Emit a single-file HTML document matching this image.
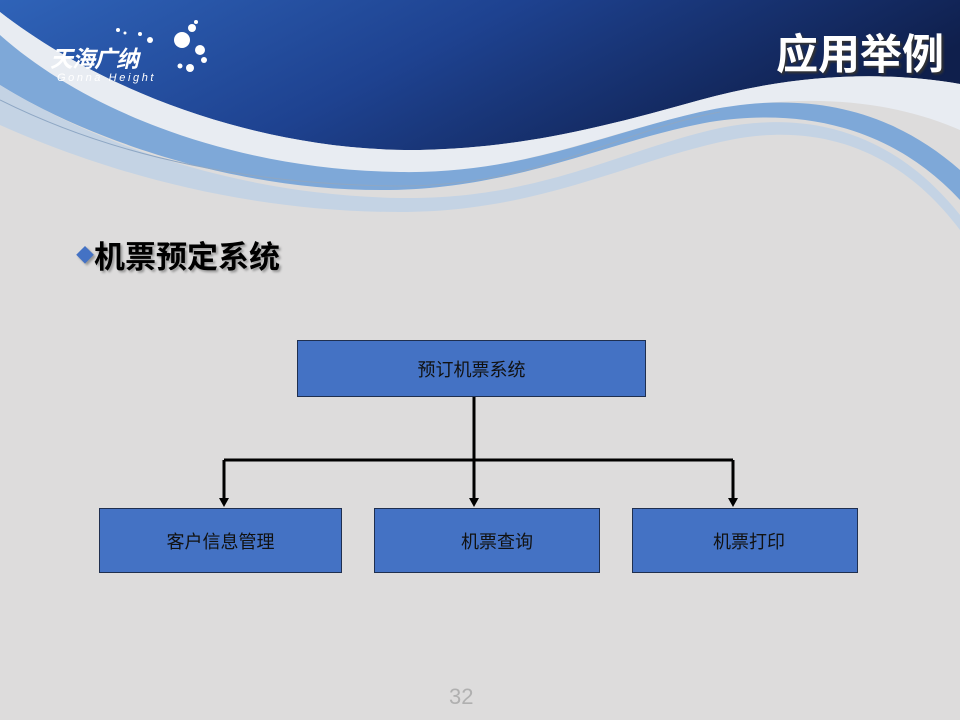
<!DOCTYPE html>
<html><head><meta charset="utf-8"><style>
body{margin:0;width:960px;height:720px;background:#dddcdc;position:relative;overflow:hidden;font-family:"Liberation Sans","Noto Sans CJK SC",sans-serif}
.box{position:absolute;background:#4472c4;border:1px solid #1f2f4f;box-sizing:border-box;color:#111;font-size:18px;display:flex;align-items:center;justify-content:center}
</style></head><body>
<svg width="960" height="720" style="position:absolute;left:0;top:0">
<defs>
<linearGradient id="g" x1="0" y1="0" x2="1" y2="0.3">
<stop offset="0" stop-color="#2f63b8"/><stop offset="0.5" stop-color="#1e4290"/><stop offset="1" stop-color="#0f1f4c"/>
</linearGradient>
</defs>
<rect width="960" height="230" fill="#dddcdc"/>
<path d="M0 0 H960 V84 C880 70 790 75 700 100 C600 128 520 148 420 150 C260 152 100 90 0 12 Z" fill="url(#g)"/>
<path d="M0 12 C100 90 260 152 420 150 C520 148 600 128 700 100 C790 75 880 70 960 84 V130 C880 95 790 95 700 112 C600 135 520 172 400 175 C240 178 80 110 0 45 Z" fill="#e8ecf2"/>
<path d="M0 35 C90 115 240 170 400 172 C520 174 600 135 700 112 C790 92 880 100 960 170 V200 C890 125 800 108 710 122 C610 140 520 188 390 190 C230 192 80 135 0 85 Z" fill="#7ea8d8"/>
<path d="M0 85 C90 140 230 195 400 198 C540 200 620 150 720 128 C820 108 900 140 960 215 V230 C900 150 820 122 730 140 C630 160 540 212 400 212 C230 212 90 165 0 125 Z" fill="#c4d3e4"/>
<path d="M0 100 C120 160 260 185 400 186 C540 186 620 130 720 112" fill="none" stroke="#8ea7c4" stroke-width="1"/>
<circle cx="182" cy="40" r="8" fill="#fff"/><circle cx="192" cy="28" r="4" fill="#fff"/><circle cx="200" cy="50" r="5" fill="#fff"/>
<circle cx="204" cy="60" r="3" fill="#fff"/><circle cx="190" cy="68" r="4" fill="#fff"/><circle cx="180" cy="66" r="2.5" fill="#fff"/>
<circle cx="150" cy="40" r="3" fill="#fff"/><circle cx="140" cy="34" r="2" fill="#fff"/><circle cx="118" cy="30" r="2" fill="#fff"/><circle cx="125" cy="33" r="1.5" fill="#fff"/><circle cx="196" cy="22" r="2" fill="#fff"/>
</svg>
<div style="position:absolute;left:50px;top:40px;color:#fff;font-size:23px;font-weight:bold;font-style:italic;letter-spacing:-1px">天海广纳</div>
<div style="position:absolute;left:57px;top:72px;color:#fff;font-size:11px;font-style:italic;letter-spacing:2.6px">Gonna Height</div>
<div style="position:absolute;left:776px;top:21px;color:#fff;font-size:42px;font-weight:bold;text-shadow:2px 2px 2px #333">应用举例</div>
<div style="position:absolute;left:76px;top:232px;font-size:31px;font-weight:bold;color:#000;text-shadow:2px 2px 2px #999"><span style="color:#4472c4;font-size:18px;vertical-align:6px">◆</span>机票预定系统</div>
<div class="box" style="left:297px;top:340px;width:349px;height:57px">预订机票系统</div>
<div class="box" style="left:99px;top:508px;width:243px;height:65px">客户信息管理</div>
<div class="box" style="left:374px;top:508px;width:226px;height:65px;padding-left:20px">机票查询</div>
<div class="box" style="left:632px;top:508px;width:226px;height:65px;padding-left:8px">机票打印</div>
<svg width="960" height="720" style="position:absolute;left:0;top:0">
<g stroke="#000" stroke-width="3" fill="none">
<path d="M474 397 V460 M224 460 H733 M224 460 V500 M474 460 V500 M733 460 V500"/>
</g>
<g fill="#000"><path d="M219 498 L229 498 L224 507Z"/><path d="M469 498 L479 498 L474 507Z"/><path d="M728 498 L738 498 L733 507Z"/></g>
</svg>
<div style="position:absolute;left:449px;top:684px;color:#b0b0b0;font-size:22px">32</div>
</body></html>
